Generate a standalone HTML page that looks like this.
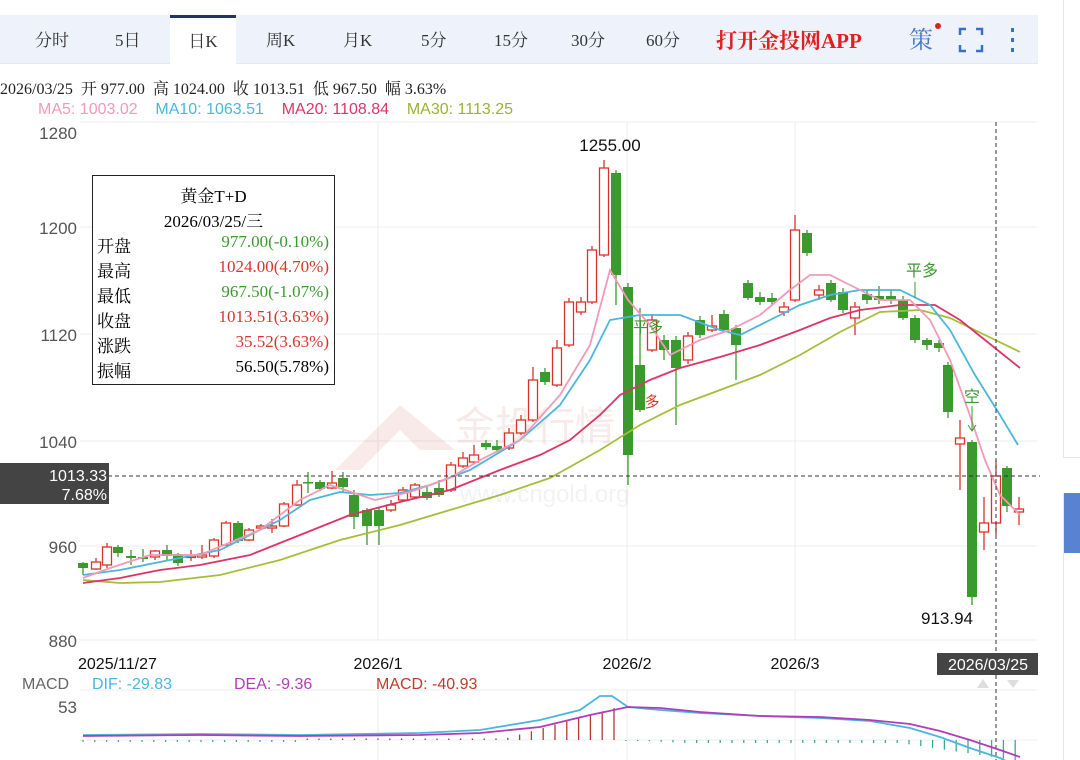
<!DOCTYPE html>
<html><head><meta charset="utf-8"><style>
body{margin:0;width:1080px;height:760px;overflow:hidden;background:#fff;font-family:"Liberation Sans","Noto Sans CJK SC",sans-serif;position:relative}
.tabs{position:absolute;left:0;top:15px;width:1038px;height:48px;background:#eef2fb;border-bottom:1px solid #e3e8f4}
.tab{position:absolute;top:0;height:48px;line-height:52px;font-family:"Liberation Serif","Noto Serif CJK SC",serif;font-size:17px;color:#333}
.act{background:#fff;border-top:3px solid #1f3566;height:46px;line-height:48px;}
.ser{font-family:"Liberation Serif","Noto Serif CJK SC",serif}
.box{position:absolute;left:92px;top:175px;width:241px;height:208px;border:1.5px solid #222;background:#fff;font-family:"Liberation Serif","Noto Serif CJK SC",serif;font-size:17px}
.row{position:absolute;left:4px;right:5px;height:25px}
.row span{position:absolute;right:0}
</style></head><body>
<div style="position:absolute;left:1063px;top:0;width:1px;height:457px;background:#e6e6e6"></div>
<div style="position:absolute;left:1063px;top:457px;width:17px;height:1px;background:#e6e6e6"></div>
<div style="position:absolute;left:1063px;top:493px;width:17px;height:60px;background:#5a82d3"></div>
<div style="position:absolute;left:1063px;top:493px;width:1px;height:267px;background:#e6e6e6"></div>
<div class="tabs">
<div class="tab" style="left:35px">分时</div>
<div class="tab" style="left:115px">5日</div>
<div class="tab act" style="left:170px;width:66px;text-align:center">日K</div>
<div class="tab" style="left:266px">周K</div>
<div class="tab" style="left:343px">月K</div>
<div class="tab" style="left:421px">5分</div>
<div class="tab" style="left:494px">15分</div>
<div class="tab" style="left:571px">30分</div>
<div class="tab" style="left:646px">60分</div>
<div class="tab" style="left:716px;color:#e02020;font-weight:bold;font-size:21px">打开金投网APP</div>
<div class="tab" style="left:909px;color:#4a78c8;font-size:24px">策</div>
<div style="position:absolute;left:935px;top:8px;width:6px;height:6px;border-radius:3px;background:#e02020"></div>
<svg style="position:absolute;left:958px;top:12px" width="70" height="26"><g stroke="#3b6fc6" stroke-width="2.5" fill="none"><path d="M2 8V2H8M18 2H24V8M24 18V24H18M8 24H2V18"/></g><g fill="#3b6fc6"><rect x="53" y="1" width="3" height="4"/><rect x="53" y="11" width="3" height="4"/><rect x="53" y="21" width="3" height="4"/></g></svg>
</div>
<div class="ser" style="position:absolute;left:0;top:76px;font-size:16px;color:#222;white-space:nowrap">2026/03/25&nbsp; 开 977.00&nbsp; 高 1024.00&nbsp; 收 1013.51&nbsp; 低 967.50&nbsp; 幅 3.63%</div>
<div style="position:absolute;left:38px;top:101px;font-size:16px;white-space:nowrap"><span style="color:#f09ab8">MA5: 1003.02</span>&nbsp;&nbsp;&nbsp;&nbsp;<span style="color:#4ab6dc">MA10: 1063.51</span>&nbsp;&nbsp;&nbsp;&nbsp;<span style="color:#dc3565">MA20: 1108.84</span>&nbsp;&nbsp;&nbsp;&nbsp;<span style="color:#9ab235">MA30: 1113.25</span></div>
<svg id="c" style="position:absolute;left:0;top:0" width="1080" height="760" font-family="Liberation Sans, sans-serif"></svg>
<div class="box">
<div style="position:absolute;top:6px;width:100%;text-align:center">黄金T+D</div>
<div style="position:absolute;top:31px;width:100%;text-align:center">2026/03/25/三</div>
<div class="row" style="top:56px">开盘<span style="color:#3a9a2e">977.00(-0.10%)</span></div>
<div class="row" style="top:81px">最高<span style="color:#d9342b">1024.00(4.70%)</span></div>
<div class="row" style="top:106px">最低<span style="color:#3a9a2e">967.50(-1.07%)</span></div>
<div class="row" style="top:131px">收盘<span style="color:#d9342b">1013.51(3.63%)</span></div>
<div class="row" style="top:156px">涨跌<span style="color:#d9342b">35.52(3.63%)</span></div>
<div class="row" style="top:181px">振幅<span>56.50(5.78%)</span></div>
</div>
<script>
var s='';
function L(x1,y1,x2,y2,c,w,d){s+='<line x1="'+x1+'" y1="'+y1+'" x2="'+x2+'" y2="'+y2+'" stroke="'+c+'" stroke-width="'+(w||1)+'"'+(d?' stroke-dasharray="'+d+'"':'')+'/>';}
function T(x,y,t,c,sz,a,f){s+='<text x="'+x+'" y="'+y+'" fill="'+c+'" font-size="'+sz+'"'+(a?' text-anchor="'+a+'"':'')+(f?' font-family="'+f+'"':'')+'>'+t+'</text>';}
[122,227,334,441,546,640].forEach(function(y){L(80,y,1037,y,'#ececec');});
[378,627,795].forEach(function(x){L(x,122,x,640,'#ececec');L(x,690,x,760,'#ececec');});
L(80,690,1037,690,'#ececec');L(80,740,1037,740,'#ececec');
s+='<g opacity="0.1"><path d="M335 470 L400 405 L455 450 L420 450 L400 430 L360 470Z" fill="#c0392b"/><text x="455" y="440" font-size="40" fill="#c0392b" font-family="Noto Sans CJK SC">金投行情</text><text x="460" y="502" font-size="24" fill="#888">www.cngold.org</text></g>';
[[1280,139],[1200,234],[1120,341],[1040,448],[960,553],[880,647]].forEach(function(a){T(77,a[1],a[0],'#555',17,'end');});
var d=[[83,563,568,562,575],[96,569,562,558,570],[107,565,547,543,568],[118,547,553,545,557],[131,556,558,550,565],[143,557,559,549,562],[155,557,551,550,560],[167,550,556,545,560],[178,554,563,553,566],[191,557,556,550,561],[202,557,555,545,559],[214,556,540,538,558],[226,545,523,521,545],[238,523,541,521,543],[249,540,530,528,541],[261,528,526,524,530],[272,528,526,519,533],[284,526,504,502,527],[297,505,485,480,506],[308,482,483,472,493],[320,482,489,480,491],[332,488,483,471,489],[343,478,487,472,493],[354,495,517,490,529],[367,510,526,508,545],[379,510,526,508,545],[391,510,505,500,512],[403,500,490,487,502],[415,497,485,483,499],[427,492,498,485,500],[439,488,495,480,497],[451,490,465,462,492],[463,466,458,452,468],[474,462,455,445,464],[486,443,447,440,450],[497,446,450,440,452],[509,448,433,428,450],[521,433,420,415,435],[533,420,380,367,422],[545,372,382,368,385],[557,385,348,340,387],[569,345,302,298,347],[581,312,302,297,315],[592,302,250,246,304],[604,255,168,160,257],[616,173,275,170,305],[628,287,455,283,485],[640,365,410,308,412],[652,350,320,315,352],[664,340,350,335,360],[676,340,368,336,425],[688,360,336,332,364],[700,320,335,316,338],[712,330,326,315,332],[724,314,330,310,332],[736,328,345,325,380],[748,283,298,280,300],[760,297,302,292,305],[772,298,302,293,305],[784,312,307,302,316],[795,300,230,215,302],[807,233,253,230,256],[819,295,290,285,300],[831,283,300,280,302],[843,292,310,288,313],[855,318,307,302,335],[867,294,300,290,304],[879,296,300,286,304],[891,296,300,290,304],[903,300,318,296,320],[915,318,340,315,343],[927,340,345,338,350],[939,343,348,340,352],[948,365,412,362,418],[960,444,438,420,490],[972,442,597,440,605],[984,532,523,497,550],[996,523,476,460,535],[1007,468,506,466,512],[1019,512,509,497,525]];
d.forEach(function(k){var up=k[2]<k[1],c=up?'#d9342b':'#3a9a2e';L(k[0],k[3],k[0],k[4],c,1.3);var t=Math.min(k[1],k[2]),h=Math.max(Math.abs(k[1]-k[2]),1.5);
if(up)s+='<rect x="'+(k[0]-4.5)+'" y="'+t+'" width="9" height="'+h+'" fill="#fff" stroke="'+c+'" stroke-width="1.3"/>';else s+='<rect x="'+(k[0]-5)+'" y="'+t+'" width="10" height="'+h+'" fill="'+c+'"/>';});
function P(pts,c,w){s+='<polyline fill="none" stroke="'+c+'" stroke-width="'+(w||1.8)+'" points="'+pts+'"/>';}
P('83,580 120,583 160,582 220,575 280,560 340,540 400,525 450,510 500,495 550,478 600,450 640,425 680,405 720,390 760,375 800,355 840,332 880,312 920,310 950,318 985,335 1020,352','#a6bd3a');
P('83,583 120,578 160,570 200,565 250,555 300,535 350,515 400,502 450,490 500,470 540,455 570,440 600,415 620,395 650,380 680,368 720,357 760,345 800,330 830,318 860,310 900,305 935,305 960,320 985,340 1020,368','#dc3565');
P('83,575 120,570 160,562 220,550 280,520 310,500 340,492 370,495 400,493 430,485 470,470 520,440 560,405 590,360 610,320 640,315 680,315 720,330 740,335 770,320 800,305 830,295 860,290 900,290 930,305 950,330 975,375 1000,415 1018,445','#4ab6dc');
P('83,578 110,568 150,555 200,555 260,530 300,500 330,485 360,495 375,500 410,492 450,478 480,460 520,440 560,395 590,345 610,270 628,300 650,325 670,355 700,340 730,330 760,315 790,290 810,275 830,275 850,285 880,300 910,300 930,320 950,360 968,410 985,460 1000,495 1020,515','#f09ab8');
T(610,151,'1255.00','#111',17,'middle');T(947,624,'913.94','#111',17,'middle');
T(922,276,'平多','#3a9a2e',16,'middle','Noto Sans CJK SC');L(915,282,915,298,'#3a9a2e');
T(972,402,'空','#3a9a2e',16,'middle','Noto Sans CJK SC');L(972,406,972,430,'#3a9a2e');s+='<path d="M968 425 L972 431 L976 425" fill="none" stroke="#3a9a2e"/>';
T(648,332,'平多','#3a9a2e',15,'middle','Noto Sans CJK SC');T(652,407,'多','#d9342b',15,'middle','Noto Sans CJK SC');L(640,340,640,358,'#3a9a2e');
L(80,476,1040,476,'#333',1,'4,3');L(996,122,996,760,'#333',1,'4,3');
s+='<rect x="0" y="463" width="109" height="41" fill="#444"/>';T(107,481,'1013.33','#fff',16,'end');T(107,500,'7.68%','#fff',16,'end');
T(78,669,'2025/11/27','#111',16);T(378,669,'2026/1','#111',16,'middle');T(627,669,'2026/2','#111',16,'middle');T(795,669,'2026/3','#111',16,'middle');
s+='<rect x="937" y="653" width="101" height="22" fill="#444"/>';T(988,670,'2026/03/25','#fff',16,'middle');
s+='<path d="M977 688 L983 679 L989 688Z M1007 680 L1019 680 L1013 688Z" fill="#ddd"/>';
T(22,689,'MACD','#666',16);T(92,689,'DIF: -29.83','#4ab6dc',16);T(234,689,'DEA: -9.36','#b03cb8',16);T(376,689,'MACD: -40.93','#c0392b',16);
T(77,713,'53','#555',17,'end');
for(var x=83;x<1022;x+=11.8){var h;if(x>500&&x<625)h=-(x-500)*0.28;else if(x>=625)h=Math.min((x-625)*0.05,3)+(x>900?(x-900)*0.15:0);else h=x<300?2:-1.5;
if(Math.abs(h)<1)h=h<0?-1:1;var c=h<0?'#b03a2e':'#3aa89a';L(x,740,x,740+h,c,1.3);}
P('83,735 200,734 300,735 420,733 480,730 540,720 580,710 600,696 612,696 628,707 660,710 700,713 760,716 820,718 870,721 910,728 940,737 970,748 1000,758 1020,768','#4ab6dc',1.8);
P('83,736 200,735 300,736 420,735 480,733 540,727 590,715 628,707 660,708 700,712 760,716 820,717 870,720 910,724 940,731 970,740 1000,750 1020,757','#b03cb8',1.8);
document.getElementById('c').innerHTML=s;
</script>
</body></html>
